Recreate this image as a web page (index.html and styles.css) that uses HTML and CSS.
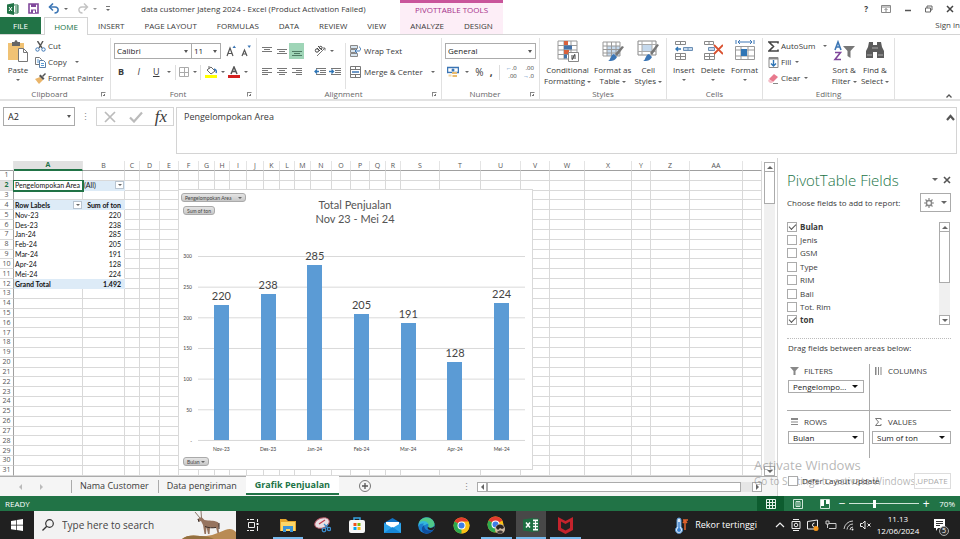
FILE: index.html
```html
<!DOCTYPE html>
<html lang="en">
<head>
    <meta charset="utf-8">
    <title>data customer Jateng 2024 - Excel</title>
    <link rel="stylesheet" href="styles.css">
</head>
<body>
    <header class="top">
        <div class="top-main">
            <div class="title-row">
                <div class="quick-access">
                    <svg width="12" height="12" viewBox="0 0 12 12"><path d="M6 2h5v8H6z" fill="#fff" stroke="#217346"/><path d="M8 4h3M8 6h3M8 8h3" stroke="#217346"/><path d="M0 1.500L7 0v12L0 10.500z" fill="#217346"/><path d="M2 4l3 4M5 4L2 8" stroke="#fff"/></svg>
                    <button aria-label="Save"><svg width="11" height="11" viewBox="0 0 11 11"><path d="M1 1h9v9H1z" fill="#fff" stroke="#80479b" stroke-width="1.600"/><path d="M3 1h5v3H3zM3 6.500h5V10H3z" fill="#80479b"/><path d="M5 7.500h2V10H5z" fill="#fff"/></svg></button>
                    <button class="with-caret" aria-label="Undo"><svg width="12" height="11" viewBox="0 0 12 11"><path d="M1.500 4h5.500c4.500 0 4 6-.5 6" fill="none" stroke="#3c76b5" stroke-width="1.600"/><path d="M5 .5L1.500 4 5 7.500" fill="none" stroke="#3c76b5" stroke-width="1.600"/></svg><i class="caret"></i></button>
                    <button class="with-caret faded" aria-label="Redo"><svg width="12" height="11" viewBox="0 0 12 11"><path d="M10.500 4H5C.5 4 1 10 5.500 10M7 .5L10.500 4 7 7.500" fill="none" stroke="#aaa" stroke-width="1.400"/></svg><i class="caret"></i></button>
                    <button class="more" aria-label="Customize toolbar"><i class="caret"></i></button>
                </div>
                <span class="doc-title">data customer Jateng 2024 - Excel (Product Activation Failed)</span>
            </div>
            <nav class="tabs">
                <button class="tab file">FILE</button>
                <button class="tab active">HOME</button>
                <button class="tab">INSERT</button>
                <button class="tab">PAGE LAYOUT</button>
                <button class="tab">FORMULAS</button>
                <button class="tab">DATA</button>
                <button class="tab">REVIEW</button>
                <button class="tab">VIEW</button>
            </nav>
        </div>
        <div class="top-context">
            <div class="context-title">PIVOTTABLE TOOLS</div>
            <nav class="tabs">
                <button class="tab">ANALYZE</button>
                <button class="tab">DESIGN</button>
            </nav>
        </div>
        <div class="top-right">
            <div class="window-buttons">
                <button aria-label="Help"><b>?</b></button>
                <button aria-label="Ribbon options"><svg width="10" height="8" viewBox="0 0 10 8"><path d="M.5.5h9v7h-9zM.5 2h9M5 7V3.500M3.500 5L5 3.500 6.500 5" fill="none" stroke="#888"/></svg></button>
                <button aria-label="Minimize"><svg width="8" height="8" viewBox="0 0 8 8"><path d="M1 5.500h6" stroke="#555" stroke-width="1.500"/></svg></button>
                <button aria-label="Restore"><svg width="8" height="8" viewBox="0 0 8 8"><path d="M.5 3h5v4h-5zM2 3V1h5v4H5.500" fill="none" stroke="#666"/></svg></button>
                <button aria-label="Close"><svg width="8" height="8" viewBox="0 0 8 8"><path d="M1 1l6 6M7 1L1 7" stroke="#444" stroke-width="1.500"/></svg></button>
            </div>
            <a class="sign-in" href="#">Sign in</a>
        </div>
    </header>

    <section class="ribbon">
        <div class="group">
            <div class="group-body clipboard">
                <button class="big"><svg width="22" height="22" viewBox="0 0 22 22"><path d="M1 3h16v17H1z" fill="#f0c274"/><path d="M5 2h2.500c0-2.500 3-2.500 3 0H13v4H5z" fill="#666"/><path d="M11.500 8.500h5l4 4v9h-9z" fill="#fff" stroke="#777"/><path d="M16.500 8.500v4h4" fill="none" stroke="#777"/></svg><span>Paste</span><i class="caret"></i></button>
                <div class="stack">
                    <button><svg width="11" height="11" viewBox="0 0 11 11"><path d="M2.500 0L7 7M8 0L4 7" stroke="#555" stroke-width="1.400"/><circle cx="2.500" cy="8.500" r="1.700" fill="none" stroke="#3c76b5"/><circle cx="8.500" cy="8.500" r="1.700" fill="none" stroke="#3c76b5"/></svg>Cut</button>
                    <button><svg width="11" height="11" viewBox="0 0 11 11"><path d="M.5.5h4l2 2v5h-6z" fill="#fff" stroke="#777"/><path d="M4.500 3.500h4l2 2v5h-6z" fill="#fff" stroke="#5a7fa8"/><path d="M6 6.500h3M6 8.500h3M2 3h2M2 5h2" stroke="#5a9bd5"/></svg>Copy<i class="caret far"></i></button>
                    <button><svg width="11" height="11" viewBox="0 0 11 11"><path d="M0 6l5-2 3 3-4 4z" fill="#eab56a"/><path d="M4 3l4 4 1.500-1.500-4-4z" fill="#555"/><path d="M7 3l3-3 1 1-3 3z" fill="#555"/></svg>Format Painter</button>
                </div>
            </div>
            <div class="group-footer"><span>Clipboard</span><i class="launcher"></i></div>
        </div>

        <div class="group">
            <div class="group-body rows">
                <div class="tool-row font-row">
                    <div class="dropdown wide"><select aria-label="Font"><option>Calibri</option></select></div>
                    <div class="dropdown narrow"><select aria-label="Font size"><option>11</option></select></div>
                    <button class="grow-font" aria-label="Increase font size"><svg width="10" height="12" viewBox="0 0 10 12"><path d="M1 11l3-8 3 8M2 8.500h4" fill="none" stroke="#555" stroke-width="1.200"/><path d="M6.500 3L8.200.5 10 3z" fill="#3c76b5"/></svg></button>
                    <button class="grow-font" aria-label="Decrease font size"><svg width="10" height="12" viewBox="0 0 10 12"><path d="M1 11l2.500-6L6 11M2 9h3" fill="none" stroke="#555" stroke-width="1.200"/><path d="M6.500.5h3.500L8.200 3z" fill="#3c76b5"/></svg></button>
                </div>
                <div class="tool-row style-row">
                    <button class="letter"><b>B</b></button>
                    <button class="letter"><em>I</em></button>
                    <button class="letter"><u>U</u></button>
                    <i class="caret"></i>
                    <i class="divider"></i>
                    <button aria-label="Borders"><svg width="10" height="10" viewBox="0 0 10 10"><path d="M.5.5h9v9h-9zM5.500 0v10M0 5.500h10" fill="none" stroke="#aaa"/></svg></button>
                    <i class="caret"></i>
                    <i class="divider"></i>
                    <button aria-label="Fill color"><svg width="12" height="12" viewBox="0 0 12 12"><path d="M2 4l4-3 4 4-4 3z" fill="#fff" stroke="#666"/><path d="M4 3V0" stroke="#666"/><path d="M9 3c3 1 2.500 3 2 4" stroke="#3c76b5" fill="none" stroke-width="1.400"/><path d="M0 9h12v3H0z" fill="#ff0"/></svg></button>
                    <i class="caret"></i>
                    <button aria-label="Font color"><svg width="12" height="12" viewBox="0 0 12 12"><path d="M3 8l3-7 3 7M4 5.500h4" fill="none" stroke="#555" stroke-width="1.500"/><path d="M0 9h12v3H0z" fill="#d4201f"/></svg></button>
                    <i class="caret"></i>
                </div>
            </div>
            <div class="group-footer"><span>Font</span><i class="launcher"></i></div>
        </div>

        <div class="group">
            <div class="group-body alignment">
                <div class="align-grid">
                    <button aria-label="Top align"><svg width="10" height="10" viewBox="0 0 10 10"><path d="M0 1.500h10M2 3.500h6M0 5.500h10" stroke="#777"/></svg></button>
                    <button aria-label="Middle align"><svg width="10" height="10" viewBox="0 0 10 10"><path d="M0 3.500h10M2 5.500h6M0 7.500h10" stroke="#777"/></svg></button>
                    <button class="pressed" aria-label="Bottom align"><svg width="10" height="10" viewBox="0 0 10 10"><path d="M0 5.500h10M2 7.500h6M0 9.500h10" stroke="#4d7a63"/></svg></button>
                    <button aria-label="Align left"><svg width="10" height="10" viewBox="0 0 10 10"><path d="M0 1.500h10M0 3.500h6M0 5.500h10M0 7.500h6" stroke="#777"/></svg></button>
                    <button aria-label="Center"><svg width="10" height="10" viewBox="0 0 10 10"><path d="M0 1.500h10M2 3.500h6M0 5.500h10M2 7.500h6" stroke="#777"/></svg></button>
                    <button aria-label="Align right"><svg width="10" height="10" viewBox="0 0 10 10"><path d="M0 1.500h10M4 3.500h6M0 5.500h10M4 7.500h6" stroke="#777"/></svg></button>
                </div>
                <div class="indent">
                    <button class="with-caret" aria-label="Orientation"><svg width="12" height="12" viewBox="0 0 12 12"><path d="M3 11l8-8M8.500 3H11v2.500" fill="none" stroke="#777"/><circle cx="3" cy="5.500" r="1.700" fill="none" stroke="#444"/><path d="M3 3l3 3M4 1l4 4" stroke="#444"/><circle cx="6.700" cy="2.600" r="1.300" fill="none" stroke="#444"/></svg><i class="caret"></i></button>
                    <div class="pair">
                        <button aria-label="Decrease indent"><svg width="12" height="10" viewBox="0 0 12 10"><path d="M2 1.500h10M6 3.500h6M6 5.500h6M2 7.500h10" stroke="#777"/><path d="M5 4.500H1M3 2.500l-2 2 2 2" fill="none" stroke="#2f75b5" stroke-width="1.300"/></svg></button>
                        <button aria-label="Increase indent"><svg width="12" height="10" viewBox="0 0 12 10"><path d="M2 1.500h10M6 3.500h6M6 5.500h6M2 7.500h10" stroke="#777"/><path d="M0 4.500h4.500M2.500 2.500l2 2-2 2" fill="none" stroke="#2f75b5" stroke-width="1.300"/></svg></button>
                    </div>
                </div>
                <div class="wrap">
                    <button><svg width="11" height="12" viewBox="0 0 11 12"><path d="M.5.500h7v3h-7zM.5 4.500h5v3h-5zM.5 8.500h7v3h-7z" fill="#d7e4ef" stroke="#888"/><path d="M5 6h4c2 0 2-4 0-4M7 4L5 6l2 2" fill="none" stroke="#3c76b5"/></svg>Wrap Text</button>
                    <button><svg width="11" height="12" viewBox="0 0 11 12"><path d="M.5.5h10v11H.5zM.5 3.500h10M.5 8.500h10M5.500.5v3M5.500 8.500v3" fill="#fff" stroke="#777"/><path d="M2 6h7" stroke="#3c76b5" stroke-width="1.500"/></svg>Merge &amp; Center<i class="caret far"></i></button>
                </div>
            </div>
            <div class="group-footer"><span>Alignment</span><i class="launcher"></i></div>
        </div>

        <div class="group">
            <div class="group-body rows">
                <div class="tool-row">
                    <div class="dropdown full"><select aria-label="Number format"><option>General</option></select></div>
                </div>
                <div class="tool-row number-row">
                    <button aria-label="Accounting format"><svg width="12" height="12" viewBox="0 0 12 12"><path d="M.5 1.500h11v5H.5z" fill="#fff" stroke="#3c76b5" stroke-width="1.500"/><circle cx="6" cy="4" r="1.500" fill="#3c76b5"/><path d="M5 6h5v5H5z" fill="#e9bb6d"/><path d="M1 8h4v3H1zM5 8.500h5" fill="#f3d6a0" stroke="#fff"/></svg></button>
                    <i class="caret"></i>
                    <button class="percent">%</button>
                    <button class="percent"><b>,</b></button>
                    <i class="divider"></i>
                    <button aria-label="Increase decimal"><span class="decimals"><span><i class="blue">←</i>.0</span><span>.00</span></span></button>
                    <button aria-label="Decrease decimal"><span class="decimals"><span>.00</span><span><i class="blue">→</i>.0</span></span></button>
                </div>
            </div>
            <div class="group-footer"><span>Number</span><i class="launcher"></i></div>
        </div>

        <div class="group">
            <div class="group-body styles">
                <button class="big"><svg width="22" height="22" viewBox="0 0 22 22"><path d="M1 1h19v18H1zM1 5.500h19M1 10h19M1 14.500h19M7 1v18M14 1v18" fill="#fff" stroke="#999"/><path d="M7 1h4v4H7zM7 10h5v4H7z" fill="#d9603b"/><path d="M7 5.500h8v4H7zM7 14.500h3v4H7z" fill="#4472a8"/><path d="M11.500 12.500h10v9h-10z" fill="#fff" stroke="#888"/><path d="M14 16h5M14 18h5M18 14l-3 6" stroke="#444"/></svg><span>Conditional<br>Formatting<i class="caret"></i></span></button>
                <button class="big"><svg width="22" height="22" viewBox="0 0 22 22"><path d="M1 2h17v14H1z" fill="#fff"/><path d="M5 6h13v10H5z" fill="#c5d9ed"/><path d="M1 2h17v14H1zM1 6h17M1 9.500h17M1 13h17M5 2v14M9.500 2v14M14 2v14" fill="none" stroke="#999"/><path d="M20 6l2 1-7 9-2-2z" fill="#777"/><path d="M12 14l3 3c-2 4-5 4-9 4 3-1 2-6 6-7z" fill="#3c76b5"/></svg><span>Format as<br>Table<i class="caret"></i></span></button>
                <button class="big"><svg width="22" height="22" viewBox="0 0 22 22"><path d="M1 1h18v14H1z" fill="#fff" stroke="#888"/><path d="M5 4.500h10v7H5z" fill="#c5d9ed"/><path d="M1 4.500h18M1 11.500h18M5 1v14M15 1v14" stroke="#aaa"/><path d="M20 4l2 1-7 10-2-2z" fill="#777"/><path d="M12 14l3 3c-2 4-5 4-9 4 3-1 2-6 6-7z" fill="#3c76b5"/></svg><span>Cell<br>Styles<i class="caret"></i></span></button>
            </div>
            <div class="group-footer"><span>Styles</span></div>
        </div>

        <div class="group">
            <div class="group-body cells">
                <button class="big"><svg width="20" height="22" viewBox="0 0 20 22"><path d="M1.500 1.500h10v3h-10zM6.500 1.500v3M1.500 13.500h10v6h-10zM6.500 13.500v6M1.500 16.500h10" fill="#fff" stroke="#888"/><path d="M9.500 7.500h9v3h-9zM14 7.500v3" fill="#c5d9ed" stroke="#6b8fb5"/><path d="M7 9H2M4 7L2 9l2 2" fill="none" stroke="#2f75b5" stroke-width="1.400"/></svg><span>Insert</span><i class="caret"></i></button>
                <button class="big"><svg width="20" height="22" viewBox="0 0 20 22"><path d="M1.500 1.500h9v3h-9zM6 1.500v3M1.500 13.500h10v6h-10zM6.500 13.500v6M1.500 16.500h10" fill="#fff" stroke="#888"/><path d="M5.500 7.500h6v3h-6z" fill="#c5d9ed" stroke="#6b8fb5"/><path d="M11 5l9 9M20 5l-9 9" stroke="#d9502f" stroke-width="1.800"/></svg><span>Delete</span><i class="caret"></i></button>
                <button class="big"><svg width="22" height="22" viewBox="0 0 22 22"><path d="M4 2h14M6 0L4 2l2 2M16 0l2 2-2 2M2 0v4M20 0v4" fill="none" stroke="#3c76b5"/><path d="M1.500 6.500h19v13h-19zM1.500 10h19M1.500 16h19M7 6.500v13M14 6.500v13" fill="#fff" stroke="#999"/><path d="M7 9h6v7H7z" fill="#2f75b5"/></svg><span>Format</span><i class="caret"></i></button>
            </div>
            <div class="group-footer"><span>Cells</span></div>
        </div>

        <div class="group">
            <div class="group-body editing">
                <div class="stack">
                    <button><svg width="11" height="11" viewBox="0 0 11 11"><path d="M10 2.500V1H1l4.500 4.500L1 10h9V8.500" fill="none" stroke="#444" stroke-width="1.600"/></svg>AutoSum<i class="caret far"></i></button>
                    <button><svg width="11" height="11" viewBox="0 0 11 11"><path d="M1 .5h9v10H1z" fill="#fff" stroke="#888"/><path d="M1 1h9v1.500H1z" fill="#888"/><path d="M5.500 3v6M3 6.500L5.500 9 8 6.500" fill="none" stroke="#2f75b5" stroke-width="1.400"/></svg>Fill<i class="caret"></i></button>
                    <button><svg width="11" height="11" viewBox="0 0 11 11"><path d="M1 6l5-5 4 3-5 5z" fill="#e8798d"/><path d="M1 6l4 3-1 1H2L0 8z" fill="#f5bdc7"/><path d="M5 10.500h5" stroke="#888"/></svg>Clear<i class="caret"></i></button>
                </div>
                <button class="big"><svg width="22" height="22" viewBox="0 0 22 22"><path d="M2 10l3-8 3 8M3 7h4" fill="none" stroke="#3c76b5" stroke-width="1.600"/><path d="M2 12.500h5.500L2 19.500h6" fill="none" stroke="#80479b" stroke-width="1.600"/><path d="M10 6h12l-4.500 5v7l-3-2v-5z" fill="#777"/></svg><span>Sort &amp;<br>Filter<i class="caret"></i></span></button>
                <button class="big"><svg width="22" height="22" viewBox="0 0 22 22"><path d="M5 2h4v3h4V2h4l1 5 2 4v7h-7v-6H9v6H2v-7l2-4z" fill="#5c5c5c"/><path d="M3 15h5M14 15h5M8 8h6" stroke="#aaa"/></svg><span>Find &amp;<br>Select<i class="caret"></i></span></button>
            </div>
            <div class="group-footer"><span>Editing</span></div>
        </div>

        <button class="collapse" aria-label="Collapse ribbon"><svg width="8" height="6" viewBox="0 0 8 6"><path d="M1.500 4.500L4 2l2.500 2.500" fill="none" stroke="#555" stroke-width="1.300"/></svg></button>
    </section>

    <section class="formula-bar">
        <div class="dropdown name-box"><select aria-label="Name box"><option>A2</option></select></div>
        <span class="grip">⋮</span>
        <div class="formula-buttons">
            <button aria-label="Cancel"><svg width="14" height="12" viewBox="0 0 14 12"><path d="M2 1l10 10M12 1L2 11" stroke="#bbb" stroke-width="1.700"/></svg></button>
            <button aria-label="Enter"><svg width="14" height="12" viewBox="0 0 14 12"><path d="M1 6.500L5 10.500 13 1.500" fill="none" stroke="#bbb" stroke-width="2.200"/></svg></button>
            <button class="fx" aria-label="Insert function"><em>fx</em></button>
        </div>
        <div class="formula-field">
            <textarea aria-label="Formula">Pengelompokan Area</textarea>
            <button aria-label="Collapse formula bar"><svg width="9" height="8" viewBox="0 0 9 8"><path d="M1 6l3.500-4L8 6" fill="none" stroke="#555" stroke-width="2.200"/></svg></button>
        </div>
    </section>

    <main class="work">
        <section class="book">
            <div class="sheet-row">
                <div class="sheet">
                    <table class="cells-table" id="cells"></table>
                    <div class="chart">
                        <div class="chart-head">
                            <div class="chart-filters">
                                <button class="pill area-pill">Pengelompokan Area<i class="caret"></i></button>
                                <button class="pill">Sum of ton</button>
                            </div>
                            <h2>Total Penjualan<br>Nov 23 - Mei 24</h2>
                        </div>
                        <div class="chart-body">
                            <div class="y-axis"><span>300</span><span>250</span><span>200</span><span>150</span><span>100</span><span>50</span><span>-</span></div>
                            <div class="plot" id="plot"></div>
                        </div>
                        <div class="x-axis" id="months"></div>
                        <button class="pill month">Bulan<i class="caret"></i></button>
                    </div>
                </div>
                <div class="scrollbar">
                    <button aria-label="Scroll up"><i class="caret up"></i></button>
                    <div class="track"><div class="thumb"></div></div>
                    <button aria-label="Scroll down"><i class="caret large"></i></button>
                </div>
            </div>
            <div class="sheet-tabs">
                <div class="tab-arrows"><i class="arrow left"></i><i class="arrow"></i></div>
                <button>Nama Customer</button>
                <button>Data pengiriman</button>
                <button class="current">Grafik Penjualan</button>
                <button class="add" aria-label="New sheet"><svg width="12" height="12" viewBox="0 0 12 12"><circle cx="6" cy="6" r="5.500" fill="none" stroke="#777"/><path d="M6 3v6M3 6h6" stroke="#555" stroke-width="1.300"/></svg></button>
                <span class="grip">⋮</span>
                <div class="h-scroll">
                    <button aria-label="Scroll left"><i class="arrow left"></i></button>
                    <div class="h-track"><div class="h-thumb"></div></div>
                    <button aria-label="Scroll right"><i class="arrow"></i></button>
                </div>
            </div>
        </section>

        <aside class="pane">
            <div class="pane-head">
                <h1>PivotTable Fields</h1>
                <i class="caret large"></i>
                <button aria-label="Close pane"><svg width="8" height="8" viewBox="0 0 8 8"><path d="M1 1l6 6M7 1L1 7" stroke="#555" stroke-width="1.600"/></svg></button>
            </div>
            <div class="choose">
                <span>Choose fields to add to report:</span>
                <button aria-label="Tools"><svg width="10" height="10" viewBox="0 0 10 10"><circle cx="5" cy="5" r="2.600" fill="none" stroke="#888" stroke-width="1.500"/><path d="M5 0v2M5 8v2M0 5h2M8 5h2M1.500 1.500l1.500 1.500M7 7l1.500 1.500M8.500 1.500L7 3M3 7L1.500 8.500" stroke="#888" stroke-width="1.200"/></svg><i class="caret large"></i></button>
            </div>
            <div class="fields">
                <div class="field-list">
                    <label><input type="checkbox" checked><b>Bulan</b></label>
                    <label><input type="checkbox">Jenis</label>
                    <label><input type="checkbox">GSM</label>
                    <label><input type="checkbox">Type</label>
                    <label><input type="checkbox">RIM</label>
                    <label><input type="checkbox">Ball</label>
                    <label><input type="checkbox">Tot. Rim</label>
                    <label><input type="checkbox" checked><b>ton</b></label>
                </div>
                <div class="scrollbar">
                    <button aria-label="Scroll up"><i class="caret up"></i></button>
                    <div class="track"><div class="thumb"></div></div>
                    <button aria-label="Scroll down"><i class="caret large"></i></button>
                </div>
            </div>
            <p class="drag">Drag fields between areas below:</p>
            <div class="areas">
                <div class="area">
                    <label for="filters"><svg width="9" height="8" viewBox="0 0 9 8"><path d="M0 0h9L5.500 4v4h-2V4z" fill="#888"/></svg>FILTERS</label>
                    <div class="dropdown"><select id="filters"><option>Pengelompo...</option></select></div>
                </div>
                <div class="area">
                    <h3><svg width="9" height="8" viewBox="0 0 9 8"><path d="M1 0h1.500v8H1zM4 0h1v8H4zM6.500 0h1v8h-1z" fill="#888"/></svg>COLUMNS</h3>
                </div>
                <div class="area">
                    <label for="rows"><svg width="9" height="8" viewBox="0 0 9 8"><path d="M1 0h7v2H1zM1 3.500h7v1H1zM1 6h7v1H1z" fill="#888"/></svg>ROWS</label>
                    <div class="dropdown"><select id="rows"><option>Bulan</option></select></div>
                </div>
                <div class="area">
                    <label for="values"><svg width="9" height="8" viewBox="0 0 9 8"><path d="M7 2V.5H1.500L4.500 4 1.500 7.500H7V6" fill="none" stroke="#777"/></svg>VALUES</label>
                    <div class="dropdown"><select id="values"><option>Sum of ton</option></select></div>
                </div>
            </div>
            <div class="pane-foot">
                <label><input type="checkbox"><span>Defer Layout Update</span></label>
                <button disabled>UPDATE</button>
            </div>
            <div class="watermark"><strong>Activate Windows</strong><span>Go to Settings to activate Windows.</span></div>
        </aside>
    </main>

    <footer class="status">
        <span>READY</span>
        <div class="views">
            <button class="on" aria-label="Normal"><svg width="10" height="10" viewBox="0 0 10 10"><path d="M.5.5h9v9h-9zM.5 3.500h9M.5 6.500h9M3.500.5v9M6.500.5v9" fill="none" stroke="#e4f2ea"/></svg></button>
            <button aria-label="Page layout"><svg width="10" height="10" viewBox="0 0 10 10"><path d="M.5.5h9v9h-9zM3 2.500h4v5H3zM5 2v6" fill="none" stroke="#cfe5d8"/></svg></button>
            <button aria-label="Page break"><svg width="10" height="10" viewBox="0 0 10 10"><path d="M.5.5h9v9h-9z" fill="none" stroke="#cfe5d8"/><path d="M1 1h3v6H1zM6 1h3v4H6z" fill="#fff"/></svg></button>
        </div>
        <div class="zoom">
            <button aria-label="Zoom out">−</button>
            <input type="range" min="10" max="180" value="70" aria-label="Zoom">
            <button aria-label="Zoom in">+</button>
            <span>70%</span>
        </div>
    </footer>

    <footer class="taskbar">
        <button class="start" aria-label="Start"><svg width="12" height="12" viewBox="0 0 12 12"><path d="M0 2l5-.8v4.500H0zM5.700 1L12 0v5.700H5.700zM0 6.400h5V11l-5-.8zM5.700 6.400H12V12l-6.300-1z" fill="#fff"/></svg></button>
        <div class="search">
            <svg width="12" height="12" viewBox="0 0 12 12"><circle cx="7.500" cy="4.500" r="3.800" fill="none" stroke="#333" stroke-width="1.200"/><path d="M4.800 7.200L.5 11.500" stroke="#333" stroke-width="1.300"/></svg>
            <input type="text" placeholder="Type here to search" aria-label="Search">
            <svg class="oryx" width="54" height="28" viewBox="0 0 54 28"><path d="M0 28c4-4 12-4 18-3 10 1 18-3 25-6 5-2 8-1 11 2v7z" fill="#b98b54"/><path d="M0 28c4-4 12-4 18-3 6 0 10 1 14 3z" fill="#94703f"/><path d="M18 7L13 1M19.500 7L19 0" stroke="#8a7768"/><path d="M15.500 8l4-2 3 3c5 1 9 0 13 2 2 1 2 4 1 6l.5 5h-1.500l-1.500-5.500c-2 .5-4 .5-6 0l-.5 6.500h-1.500l-1.500-7-.5 7h-1.500l-1.500-9-2-4-2 .5z" fill="#96745f"/><path d="M23 15.500c4 1.500 7 1.500 11 1M37 12v6" stroke="#3b2f2a" fill="none"/><path d="M16 8l1 3" stroke="#3b2f2a"/></svg>
        </div>
        <nav class="apps">
            <button aria-label="Task view"><svg width="12" height="12" viewBox="0 0 12 12"><path d="M0 .5h2M3 .5h4M0 11.500h2M3 11.500h4M1.500 3.500h6v5h-6zM10.500 0v3M10.500 7v5" fill="none" stroke="#eee"/><path d="M9.500 4h2v2h-2z" fill="#fff"/></svg></button>
            <button class="open" aria-label="File Explorer"><svg width="16" height="14" viewBox="0 0 16 14"><path d="M0 1h6l2 2h8v10H0z" fill="#e6a62c"/><path d="M1 4h14v9H1z" fill="#fcd667"/><path d="M3 14V8h10v6h-3v-3H6v3z" fill="#3b93d6"/></svg></button>
            <button aria-label="Snip"><svg width="17" height="16" viewBox="0 0 17 16"><ellipse cx="8" cy="6" rx="7.500" ry="5" fill="#e9dfe2" stroke="#b55361" transform="rotate(-20 8 6)"/><path d="M5 7l6-4" stroke="#c0394b" stroke-width="1.200"/><path d="M10 7l4 4M14 7l-3 5" stroke="#3c8ed0" stroke-width="1.200"/><circle cx="10" cy="13" r="1.800" fill="none" stroke="#3c8ed0" stroke-width="1.300"/><circle cx="15" cy="12" r="1.600" fill="none" stroke="#3c8ed0" stroke-width="1.300"/></svg></button>
            <button aria-label="Store"><svg width="16" height="16" viewBox="0 0 16 16"><path d="M5 4V1h6v3" fill="none" stroke="#35a3e0" stroke-width="1.500"/><rect y="3" width="16" height="13" rx="2" fill="#f6f6f6"/><path d="M4.500 6h3v3h-3z" fill="#f1511b"/><path d="M8.500 6h3v3h-3z" fill="#80bb0a"/><path d="M4.500 10h3v3h-3z" fill="#00a3ee"/><path d="M8.500 10h3v3h-3z" fill="#fbb60b"/></svg></button>
            <button aria-label="Mail"><svg width="17" height="15" viewBox="0 0 17 15"><path d="M0 5l8.500-5L17 5v10H0z" fill="#1272c4"/><path d="M2 4h13v6H2z" fill="#fff"/><path d="M0 5l8.500 5L17 5v10H0z" fill="#2ea4ec"/><path d="M0 15l8.500-6L17 15z" fill="#1788d8"/></svg></button>
            <button aria-label="Edge"><svg width="17" height="17" viewBox="0 0 17 17"><circle cx="8.500" cy="8.500" r="8.300" fill="#1c7fd0"/><path d="M.5 7C2-1 14-2 16.500 6.500c.5 5-6 5-6.500 3 2-3-2-5-5-4C2.500 5.500 1 6 .5 7z" fill="#4fc98a"/><path d="M.5 7C2 3 9 3 10.500 7.500 8 5.500 4 10 8 14c-4-1-4-6-2-7.500C3 6 1 7 .5 10z" fill="#33b7dc"/><path d="M6.500 8c-1 5 4 7 9 4.500C12 19 3 17 4 11c.3-1.500 1-2.500 2.500-3z" fill="#0f4fa0"/><path d="M10 9.500c0 2 6 2 6.500-1 .2 2-.4 3-1 4-3 1.200-7 .5-5.500-3z" fill="#222"/></svg></button>
            <button aria-label="Chrome"><svg width="17" height="17" viewBox="0 0 17 17"><circle cx="8.500" cy="8.500" r="8" fill="#fbc116"/><path d="M8.500 8.500L1.600 4.500a8 8 0 0 1 13.800 0z" fill="#e33b2e"/><path d="M8.500 8.500V16.500A8 8 0 0 1 1.600 4.500z" fill="#2da94f"/><path d="M8.500 4.500h6.900a8 8 0 0 1-6.900 12l3.400-6z" fill="#fbc116"/><circle cx="8.500" cy="8.500" r="4" fill="#fff"/><circle cx="8.500" cy="8.500" r="3" fill="#3e7de8"/></svg></button>
            <button class="open" aria-label="Chrome profile"><svg width="18" height="18" viewBox="0 0 18 18"><circle cx="8.500" cy="8.500" r="8" fill="#fbc116"/><path d="M8.500 8.500L1.600 4.500a8 8 0 0 1 13.800 0z" fill="#e33b2e"/><path d="M8.500 8.500V16.500A8 8 0 0 1 1.600 4.500z" fill="#2da94f"/><circle cx="8.500" cy="8.500" r="4" fill="#fff"/><circle cx="8.500" cy="8.500" r="3" fill="#3e7de8"/><circle cx="13" cy="13" r="5" fill="#cbb9a4"/><path d="M9 12c0-4 7-5 8 0l-2 1-2-1-2 2z" fill="#2b2422"/><path d="M10 16c2-2 5-2 6 0-1.500 2.300-4.500 2.300-6 0z" fill="#443b38"/></svg></button>
            <button class="open focused" aria-label="Excel"><svg width="16" height="14" viewBox="0 0 16 14"><path d="M8 1h7.500v12H8z" fill="#fff" stroke="#1d6f42"/><path d="M10 4h2M13 4h2M10 7h2M13 7h2M10 10h2M13 10h2" stroke="#1d6f42" stroke-width="1.500"/><path d="M0 1.500L10 0v14L0 12.500z" fill="#1d6f42"/><path d="M3 4.500l4 5M7 4.500l-4 5" stroke="#fff" stroke-width="1.500"/></svg></button>
            <button class="open" aria-label="McAfee"><svg width="15" height="17" viewBox="0 0 15 17"><path d="M0 0l7.500 4L15 0v13l-7.500 4L0 13z" fill="#c4232c"/><path d="M3 4.500l4.500 2.500L12 4.500V11l-4.500 2.500L3 11z" fill="#222"/></svg></button>
        </nav>
        <button class="news"><svg width="13" height="17" viewBox="0 0 13 17"><path d="M2 3a2 2 0 0 1 4 0v7a3.500 3.500 0 1 1-4 0z" fill="#dfe9f5" stroke="#4e94d8"/><circle cx="4" cy="13" r="2" fill="#3b82d0"/><path d="M4 5v8" stroke="#3b82d0" stroke-width="1.500"/><path d="M10 13V4M8 6l2-2.500L12 6M8 3h5" fill="none" stroke="#e2622b" stroke-width="1.500"/></svg>Rekor tertinggi</button>
        <div class="tray">
            <svg width="10" height="12" viewBox="0 0 10 12"><path d="M1 8l4-4 4 4" fill="none" stroke="#eee" stroke-width="1.200"/></svg>
            <svg width="10" height="12" viewBox="0 0 10 12"><path d="M2 .5h6M2 11.500h6M1 2.500h8v7H1z" fill="none" stroke="#eee"/><circle cx="5" cy="6" r="1.800" fill="none" stroke="#eee"/></svg>
            <svg width="12" height="12" viewBox="0 0 12 12"><path d="M.5 2.500l10-1.500v9h-10z" fill="none" stroke="#eee"/><path d="M7.500 4a2 2 0 1 0 0 4" fill="none" stroke="#eee"/><circle cx="9" cy="9.500" r="2.500" fill="#f5971d"/></svg>
            <svg width="12" height="12" viewBox="0 0 12 12"><path d="M4 4.500h7v5H4M1 2h3v3H1zM2.500 5v4" fill="none" stroke="#ccc"/></svg>
            <svg width="11" height="12" viewBox="0 0 11 12"><path d="M1 10A9 9 0 0 1 10 2M4 10.500a6 6 0 0 1 6-5.500M7 11a3 3 0 0 1 3-3" fill="none" stroke="#ccc"/><circle cx="9.500" cy="10.500" r="1" fill="#eee"/></svg>
            <svg width="12" height="12" viewBox="0 0 12 12"><path d="M.5 4.500h2L5 2v8L2.500 7.500h-2zM7.500 4.500l3 3M10.500 4.500l-3 3" fill="none" stroke="#eee"/></svg>
        </div>
        <div class="clock"><span>11.13</span><span>12/06/2024</span></div>
        <button class="notices" aria-label="Notifications"><svg width="14" height="14" viewBox="0 0 14 14"><path d="M1 1h11v9H5l-2 3v-3H1z" fill="#fff"/><path d="M3 3.500h7M3 5.500h7M3 7.500h4" stroke="#333"/></svg><span class="badge">5</span></button>
    </footer>

    <script src="script.js"></script>
</body>
</html>
```
FILE: styles.css
```css
* {
    box-sizing: border-box;
}

body {
    margin: 0;
    height: 100vh;
    display: flex;
    flex-direction: column;
    overflow: hidden;
    background: #fff;
    color: #3a3a3a;
    font: 8px/10px "Open Sans", "Noto Sans", sans-serif;
}

button, select, input, textarea {
    font: inherit;
    color: inherit;
    margin: 0;
    padding: 0;
    border: 0;
    background: none;
    border-radius: 0;
}

button {
    display: flex;
    align-items: center;
    justify-content: center;
    white-space: nowrap;
}

svg {
    flex: none;
    display: block;
}

h1, h2, h3, p {
    margin: 0;
    font-weight: normal;
}

/* small shared shapes */
.caret {
    display: inline-block;
    flex: none;
    border: 2px solid transparent;
    border-top-color: #666;
    border-bottom: 0;
}

.caret.large {
    border-width: 3px;
    border-bottom: 0;
}

.caret.up {
    border-width: 3px;
    border-top: 0;
    border-bottom-color: #666;
    border-bottom-style: solid;
}

.arrow {
    display: block;
    border: 3px solid transparent;
    border-left-color: #666;
    border-right: 0;
}

.arrow.left {
    border-left: 0;
    border-right: 3px solid #666;
}

.divider {
    width: 1px;
    height: 15px;
    background: #ddd;
}

.dropdown {
    display: flex;
    align-items: center;
    border: 1px solid #ababab;
    background: #fff;
    position: relative;
}

.dropdown select {
    flex: 1;
    min-width: 0;
    height: 100%;
    padding: 0 2px;
    appearance: none;
    color: #222;
}

.dropdown::after {
    content: "";
    position: absolute;
    right: 3px;
    border: 2px solid transparent;
    border-top: 3px solid #555;
    border-bottom: 0;
}

/* title and tabs */
.top {
    display: flex;
    height: 34px;
}

.top-main {
    flex: 0 0 400px;
    display: flex;
    flex-direction: column;
}

.title-row {
    display: flex;
    align-items: center;
    height: 17px;
}

.quick-access {
    display: flex;
    align-items: center;
    gap: 9px;
    padding-left: 7px;
    flex: 0 0 141px;
}

.with-caret {
    gap: 4px;
}

.faded {
    opacity: 0.7;
}

.more {
    border-top: 1px solid #777;
    padding-top: 2px;
}

.tabs {
    display: flex;
    height: 17px;
}

.tab {
    padding: 0 10px;
}

.tab.file {
    width: 41px;
    margin-right: 3px;
    background: #217346;
    color: #fff;
}

.tab.active {
    width: 44px;
    border: 1px solid #d4d4d4;
    border-bottom: 0;
    background: #fff;
    color: #217346;
    margin-bottom: -1px;
    position: relative;
}

.top-context {
    flex: 0 0 103px;
    border-top: 3px solid #c9559b;
    background: #fdeef7;
}

.context-title {
    height: 14px;
    line-height: 13px;
    text-align: center;
    color: #a6318a;
}

.top-context .tabs {
    justify-content: center;
}

.top-right {
    flex: 1;
    display: flex;
    flex-direction: column;
    align-items: flex-end;
}

.window-buttons {
    display: flex;
    align-items: center;
    gap: 13px;
    height: 17px;
    padding-right: 6px;
}

.sign-in {
    color: #444;
    text-decoration: none;
    line-height: 15px;
}

/* ribbon */
.ribbon {
    display: grid;
    grid-template-columns: 111px 146px 185px 98px 127px 96px 132px 1fr;
    height: 67px;
    padding-top: 3px;
    border-top: 1px solid #d4d4d4;
    border-bottom: 2px solid #e2e2e2;
}

.group {
    display: flex;
    flex-direction: column;
    border-right: 1px solid #e1e1e1;
}

.group-body {
    flex: 1;
    display: flex;
}

.group-footer {
    display: flex;
    align-items: center;
    height: 10px;
    padding: 0 4px;
    color: #666;
}

.group-footer span {
    flex: 1;
    text-align: center;
}

.group-footer span:first-child:not(:last-child) {
    padding-right: 6px;
}

.launcher {
    width: 5px;
    height: 5px;
    border: 1px solid #888;
    border-right-color: transparent;
    border-bottom-color: transparent;
    background: linear-gradient(135deg, transparent 60%, #777 60%);
}

.big {
    flex-direction: column;
    justify-content: flex-start;
    align-self: flex-start;
    padding-top: 2px;
    line-height: 11px;
}

.big svg {
    margin-bottom: 2px;
}

.big span .caret {
    margin-left: 2px;
    vertical-align: middle;
}

.big > .caret {
    margin-top: 4px;
}

.stack {
    display: flex;
    flex-direction: column;
    align-items: flex-start;
}

.stack button {
    height: 16px;
    gap: 2px;
}

.stack .caret {
    margin-left: 2px;
}

.stack .far {
    margin-left: 6px;
}

.clipboard {
    gap: 6px;
    padding-left: 7px;
}

.rows {
    flex-direction: column;
    padding: 5px 3px 0;
    gap: 5px;
}

.tool-row {
    display: flex;
    align-items: center;
    height: 16px;
}

.dropdown.wide {
    width: 78px;
    height: 16px;
}

.dropdown.narrow {
    width: 30px;
    height: 16px;
    margin-left: -1px;
}

.dropdown.full {
    width: 92px;
    height: 16px;
}

.grow-font {
    margin-left: 5px;
}

.style-row {
    justify-content: space-between;
    padding-right: 5px;
    font-size: 9px;
}

.letter {
    width: 14px;
}

.alignment {
    padding: 5px 4px 0 2px;
}

.align-grid {
    display: grid;
    grid-template-columns: repeat(3, 15px);
    grid-auto-rows: 16px;
    row-gap: 5px;
}

.pressed {
    background: #9fd5b7;
}

.indent {
    display: flex;
    flex-direction: column;
    gap: 5px;
    width: 40px;
    margin-left: 2px;
    padding-left: 8px;
    border-right: 1px solid #e1e1e1;
}

.indent > * {
    height: 16px;
    justify-content: flex-start;
}

.pair {
    display: flex;
    align-items: center;
    gap: 3px;
}

.wrap {
    display: flex;
    flex-direction: column;
    align-items: flex-start;
    gap: 5px;
    padding-left: 4px;
}

.wrap button {
    height: 16px;
    gap: 3px;
}

.wrap .caret {
    margin-left: 5px;
}

.number-row {
    justify-content: space-between;
    padding: 0 2px;
}

.percent {
    font-size: 10px;
}

.decimals {
    display: flex;
    flex-direction: column;
    align-items: flex-end;
    font-size: 6px;
    line-height: 8px;
}

.blue {
    color: #2f75b5;
    font-style: normal;
}

.styles {
    justify-content: space-between;
    padding: 0 4px;
}

.cells {
    justify-content: space-between;
    padding: 0 4px 0 6px;
}

.editing {
    justify-content: space-between;
    padding: 0 5px;
}

.collapse {
    align-self: end;
    justify-self: end;
    margin-right: 7px;
}

/* formula bar */
.formula-bar {
    display: flex;
    align-items: flex-start;
    height: 57px;
    padding: 6px 3px 0;
    font-size: 9px;
}

.name-box {
    width: 72px;
    height: 19px;
}

.name-box select {
    padding-left: 4px;
}

.grip {
    width: 21px;
    line-height: 19px;
    text-align: center;
    color: #888;
}

.formula-buttons {
    display: flex;
    justify-content: space-around;
    width: 78px;
    height: 19px;
    border: 1px solid #d4d4d4;
    margin-right: 2px;
}

.fx {
    font: 17px/15px "Liberation Serif", serif;
}

.formula-field {
    flex: 1;
    display: flex;
    align-items: flex-start;
    height: 47px;
    border: 1px solid #d4d4d4;
}

.formula-field textarea {
    flex: 1;
    height: 100%;
    padding: 3px 7px;
    resize: none;
    line-height: 12px;
}

.formula-field button {
    padding: 6px 1px;
}

/* worksheet */
.work {
    flex: 1;
    min-height: 0;
    display: flex;
}

.book {
    flex: 1;
    min-width: 0;
    display: flex;
    flex-direction: column;
}

.sheet-row {
    flex: 1;
    min-height: 0;
    display: flex;
    padding-top: 3px;
}

.sheet {
    flex: 1;
    min-width: 0;
    position: relative;
    overflow: hidden;
}

.cells-table {
    width: 100%;
    height: 100%;
    table-layout: fixed;
    border-collapse: separate;
    border-spacing: 0;
    font-size: 7px;
    line-height: 8px;
    color: #111;
}

.cells-table th, .cells-table td {
    padding: 0;
    border-right: 1px solid #d9d9d9;
    border-bottom: 1px solid #d9d9d9;
    white-space: nowrap;
}

.cells-table th {
    font-weight: normal;
    color: #555;
    border-right-color: #e4e4e4;
}

.cells-table td {
    font-family: Lato, sans-serif;
}

.cells-table thead th {
    border-bottom-color: #a0a0a0;
}

.cells-table th.selected {
    background: #e1e1e1;
    color: #217346;
    font-weight: bold;
}

.cells-table thead th.selected {
    border-bottom: 2px solid #217346;
}

.cells-table tbody th {
    border-right-color: #a0a0a0;
}

.cells-table td.text {
    padding-left: 1px;
    border-color: #fff;
}

.cells-table td.number {
    padding-right: 3px;
    text-align: right;
    border-bottom-color: #fff;
}

.cells-table td.head {
    background: #ddebf7;
    border-color: #ddebf7;
}

.cells-table td.total {
    font-weight: bold;
}

.cells-table td.picked {
    outline: 1px solid #217346;
    border-color: #217346;
    background: #fff;
    position: relative;
}

.cell-flex {
    display: flex;
    justify-content: space-between;
    align-items: center;
}

.cell-filter {
    justify-content: center;
    width: 9px;
    height: 8px;
    border: 1px solid #b8c4d0;
    background: #fff;
}

/* chart */
.chart {
    position: absolute;
    left: 178px;
    top: 28px;
    width: 355px;
    height: 281px;
    display: flex;
    flex-direction: column;
    padding: 3px 7px 3px 2px;
    background: #fff;
    border: 1px solid #d9d9d9;
    font-family: Lato, sans-serif;
    color: #444;
}

.chart-head {
    display: grid;
    grid-template-columns: 66px 1fr 66px;
    height: 63px;
}

.chart-head h2 {
    padding: 5px 0 0 4px;
    font-size: 11px;
    line-height: 14px;
    text-align: center;
    color: #555;
}

.pill {
    justify-content: space-between;
    width: 32px;
    height: 9px;
    margin: 0 0 4px 2px;
    padding: 0 3px;
    border: 1px solid #aaa;
    border-radius: 3px;
    background: linear-gradient(#e4e4e4, #c8c8c8);
    font-size: 5px;
    line-height: 6px;
}

.area-pill {
    width: 65px;
    margin-left: 0;
}

.chart-body {
    flex: 1;
    display: flex;
}

.y-axis {
    display: flex;
    flex-direction: column;
    justify-content: space-between;
    width: 11px;
    margin: -3px 6px -3px 0;
    font-size: 5px;
    line-height: 6px;
    text-align: right;
}

.plot {
    flex: 1;
    display: flex;
    border-bottom: 1px solid #d9d9d9;
    background: linear-gradient(#d9d9d9 1px, transparent 1px) 0 0 / 100% 16.667%;
}

.bar-slot {
    flex: 1;
    display: flex;
    flex-direction: column;
    align-items: center;
    justify-content: flex-end;
}

.bar-value {
    flex: none;
    font-size: 11px;
    line-height: 18px;
    height: 18px;
}

.bar {
    flex: none;
    width: 15px;
    background: #5b9bd5;
}

.x-axis {
    display: flex;
    height: 16px;
    margin-left: 17px;
    font-size: 5px;
    line-height: 16px;
}

.x-axis span {
    flex: 1;
    text-align: center;
}

.pill.month {
    width: 26px;
    margin-bottom: 0;
}

.scrollbar {
    display: flex;
    flex-direction: column;
    width: 11px;
}

.scrollbar button {
    height: 10px;
    border: 1px solid #ababab;
    background: #fff;
}

.track {
    flex: 1;
    background: #f0f0f0;
}

.thumb {
    height: 62%;
    border: 1px solid #ababab;
    border-top: 0;
    background: #fff;
}

.sheet-row .scrollbar {
    margin: 1px 2px 0 2px;
}

.sheet-row .thumb {
    height: 11%;
}

.sheet-tabs {
    display: flex;
    align-items: stretch;
    height: 20px;
    border-top: 1px solid #ababab;
    background: #f5f5f5;
    font-size: 9px;
}

.sheet-tabs > button {
    margin-bottom: 1px;
    padding: 0 9px;
}

.sheet-tabs > button:not(.current):not(.add) {
    background: linear-gradient(#ababab, #ababab) 0 50% / 1px 13px no-repeat;
}

.tab-arrows {
    display: flex;
    align-items: center;
    justify-content: space-between;
    width: 71px;
    padding: 0 28px 0 19px;
    opacity: 0.4;
}

.sheet-tabs > .current {
    margin-top: -1px;
    padding: 0 9px;
    background: #fff;
    border-bottom: 2px solid #217346;
    color: #217346;
    font-weight: bold;
}

.sheet-tabs > .add {
    padding: 0 20px;
}

.sheet-tabs .grip {
    margin-left: auto;
}

.h-scroll {
    display: flex;
    align-items: center;
    flex: 0 0 300px;
    padding-right: 15px;
}

.h-scroll button {
    width: 10px;
    height: 10px;
    border: 1px solid #ababab;
    background: #fff;
}

.h-track {
    flex: 1;
    height: 10px;
    background: #e6e6e6;
}

.h-thumb {
    width: 96%;
    height: 10px;
    border: 1px solid #ababab;
    background: #fff;
}

/* field pane */
.pane {
    flex: 0 0 183px;
    display: flex;
    flex-direction: column;
    padding: 13px 9px 0;
    border-left: 1px solid #d4d4d4;
    position: relative;
}

.pane-head {
    display: flex;
    align-items: center;
    height: 17px;
}

.pane h1 {
    flex: 1;
    color: #217346;
    font-size: 15px;
    font-weight: 300;
}

.pane-head button {
    margin-left: 5px;
}

.choose {
    display: flex;
    align-items: center;
    justify-content: space-between;
    height: 19px;
    margin-top: 5px;
}

.choose button {
    gap: 7px;
    width: 31px;
    height: 19px;
    border: 1px solid #ababab;
}

.fields {
    display: flex;
    justify-content: space-between;
    height: 127px;
    padding: 8px 1px 11px 0;
    border-bottom: 1px dotted #bbb;
}

.field-list {
    display: flex;
    flex-direction: column;
}

.field-list label {
    flex: 1;
    display: flex;
    align-items: center;
    gap: 3px;
}

.fields .scrollbar {
    margin: 2px 0;
}

input[type="checkbox"] {
    appearance: none;
    flex: none;
    width: 10px;
    height: 10px;
    border: 1px solid #ababab;
    background: #fff;
}

input[type="checkbox"]:checked::after {
    content: "";
    display: block;
    width: 6px;
    height: 3px;
    margin: 1px;
    border-left: 1px solid #555;
    border-bottom: 1px solid #555;
    transform: rotate(-45deg);
}

.drag {
    margin: 3px 0 0 1px;
    line-height: 11px;
}

.areas {
    display: grid;
    grid-template-columns: 1fr 1fr;
    grid-template-rows: 47px 47px;
    margin-top: 11px;
}

.area {
    padding: 0 5px 0 1px;
}

.area:nth-child(even) {
    padding: 0 0 0 2px;
    border-left: 1px solid #ababab;
}

.area:nth-child(-n+2) {
    border-bottom: 1px solid #ababab;
}

.area:nth-child(n+3) {
    padding-top: 4px;
}

.area label, .area h3 {
    display: flex;
    align-items: center;
    gap: 5px;
    height: 16px;
    padding: 0 0 3px 2px;
    font-size: 8px;
}

.area .dropdown {
    height: 13px;
}

.area .dropdown select {
    padding-left: 4px;
}

.area .dropdown::after {
    right: 5px;
    border-width: 3px;
    border-top-color: #111;
    border-bottom: 0;
}

.pane-foot {
    display: flex;
    align-items: center;
    justify-content: space-between;
    margin-top: 15px;
    height: 16px;
    padding-left: 1px;
    z-index: 1;
}

.pane-foot label {
    display: flex;
    align-items: center;
    gap: 4px;
}

.pane-foot button {
    width: 37px;
    height: 16px;
    border: 1px solid #ddd;
    color: #aaa;
}

/* sits over the pane and the edge of the sheet */
.watermark {
    position: absolute;
    left: -24px;
    bottom: 7px;
    display: flex;
    flex-direction: column;
    color: rgba(110, 110, 110, 0.5);
    font-size: 10px;
    line-height: 15px;
    white-space: nowrap;
}

.watermark strong {
    font-size: 13px;
    font-weight: normal;
    line-height: 17px;
}

/* status bar */
.status {
    display: flex;
    align-items: center;
    height: 15px;
    padding: 0 5px;
    background: #217346;
    color: #fff;
}

.views {
    display: flex;
    margin-left: auto;
}

.views button {
    width: 27px;
    height: 15px;
}

.views .on {
    background: #0d5c2f;
}

.zoom {
    display: flex;
    align-items: center;
    gap: 3px;
}

.zoom button {
    font-size: 12px;
    width: 8px;
}

.zoom span {
    margin-left: 6px;
}

.zoom input {
    appearance: none;
    width: 70px;
    height: 1px;
    background: #cfe5d8;
}

.zoom input::-webkit-slider-thumb {
    appearance: none;
    width: 3px;
    height: 8px;
    background: #fff;
}

/* taskbar */
.taskbar {
    display: flex;
    align-items: stretch;
    height: 28px;
    background: #202020;
    color: #fff;
    font-size: 9px;
}

.start {
    width: 34px;
}

.search {
    display: flex;
    align-items: center;
    gap: 8px;
    width: 202px;
    padding-left: 8px;
    background: #f2f2f2;
}

.search input {
    flex: 1;
    min-width: 0;
    font-size: 10px;
}

.search input::placeholder {
    color: #444;
    opacity: 1;
}

.apps {
    display: flex;
    flex: 0 0 347px;
}

.apps button {
    flex: 1;
    margin: 0 2px;
    border-top: 2px solid transparent;
    border-bottom: 2px solid transparent;
}

.apps .open {
    border-bottom-color: #76b9ed;
}

.apps .focused {
    background: #484848;
    border-top-color: #484848;
}

.news {
    gap: 7px;
    margin-left: auto;
}

.tray {
    display: flex;
    align-items: center;
    gap: 6px;
    padding: 0 4px 0 18px;
}

.clock {
    display: flex;
    flex-direction: column;
    justify-content: center;
    width: 44px;
    font-size: 8px;
    line-height: 12px;
    text-align: center;
}

.notices {
    width: 40px;
    position: relative;
}

.badge {
    position: absolute;
    right: 11px;
    bottom: 3px;
    width: 10px;
    height: 10px;
    border: 1px solid #aaa;
    border-radius: 5px;
    background: #333;
    font-size: 7px;
    line-height: 8px;
}
```
FILE: script.js
```js
const columns = [
    ['A', 69], ['B', 42], ['C', 15], ['D', 20], ['E', 19], ['F', 20], ['G', 16],
    ['H', 15], ['I', 17], ['J', 17], ['K', 16], ['L', 15], ['M', 16], ['N', 21],
    ['O', 19], ['P', 19], ['Q', 16], ['R', 15], ['S', 39], ['T', 41], ['U', 40],
    ['V', 29], ['W', 35], ['X', 47], ['Y', 19], ['Z', 39], ['AA', 53]
];

const sales = [
    ['Nov-23', 220], ['Des-23', 238], ['Jan-24', 285], ['Feb-24', 205],
    ['Mar-24', 191], ['Apr-24', 128], ['Mei-24', 224]
];

const filter = '<span class="cell-filter cell-flex"><i class="caret"></i></span>';

// pivot table contents by row number: [class, html] for columns A and B
const rows = {
    2: [['text picked', 'Pengelompokan Area'], ['text head', `<div class="cell-flex">(All)${filter}</div>`]],
    4: [['text head total', `<div class="cell-flex">Row Labels${filter}</div>`], ['number head total', 'Sum of ton']],
    12: [['text head total', 'Grand Total'], ['number head total', '1.492']]
};
sales.forEach(([month, ton], i) => {
    rows[i + 5] = [['text', month], ['number', ton]];
});

let html = '<colgroup><col style="width:14px">';
html += columns.map(([, width]) => `<col style="width:${width}px">`).join('');
html += '<col></colgroup><thead><tr><th></th>';
html += columns.map(([name]) => `<th class="${name === 'A' ? 'selected' : ''}">${name}</th>`).join('');
html += '<th></th></tr></thead><tbody>';
for (let r = 1; r <= 31; r++) {
    html += `<tr><th class="${r === 2 ? 'selected' : ''}">${r}</th>`;
    for (let c = 0; c <= columns.length; c++) {
        const cell = rows[r] && rows[r][c];
        html += cell ? `<td class="${cell[0]}">${cell[1]}</td>` : '<td></td>';
    }
    html += '</tr>';
}
document.getElementById('cells').innerHTML = html + '</tbody>';

document.getElementById('plot').innerHTML = sales.map(([, ton]) =>
    `<div class="bar-slot"><span class="bar-value">${ton}</span><div class="bar" style="height:${ton / 3}%"></div></div>`
).join('');

document.getElementById('months').innerHTML = sales.map(([month]) => `<span>${month}</span>`).join('');
```
